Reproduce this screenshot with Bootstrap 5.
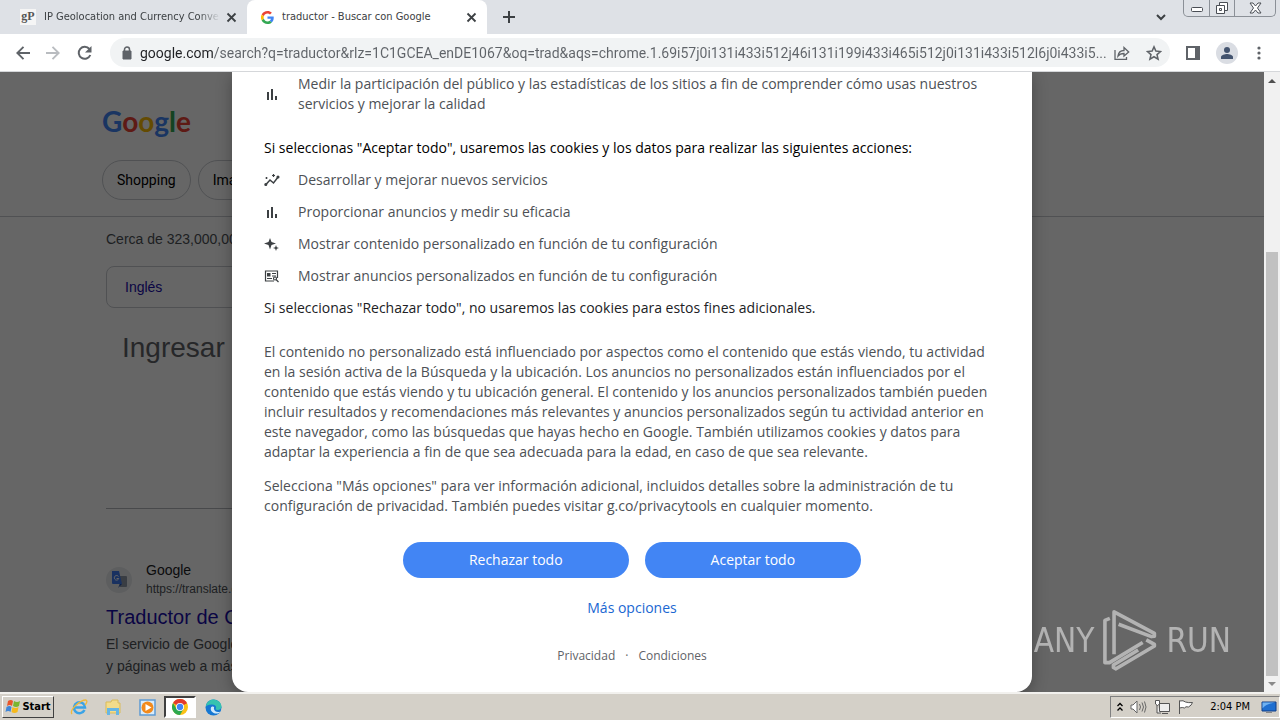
<!DOCTYPE html>
<html lang="es">
<head>
<meta charset="utf-8">
<meta name="viewport" content="width=device-width, initial-scale=1">
<title>traductor - Buscar con Google</title>
<link href="https://cdn.jsdelivr.net/npm/bootstrap@5.3.0/dist/css/bootstrap.min.css" rel="stylesheet">
<style>
body{font-family:"Liberation Sans",Arial,sans-serif;font-size:14px;line-height:20px;color:#4d5156;height:100vh;overflow:hidden}
a{text-decoration:none}
button{font:inherit;color:inherit}
.ibtn{border:0;background:none;padding:0;display:flex;align-items:center;justify-content:center;flex:none}
.ui{font-family:"DejaVu Sans Condensed",sans-serif;font-size:11px;color:#3c4043}
.tabstrip{background:#dee1e6;height:34px}
.tab{width:240px;height:34px;padding:0 8px 0 14px}
.tab.idle{width:247px;padding-left:20px}
.tab.on{background:#fff;border-radius:8px 8px 0 0}
.fade-end{-webkit-mask-image:linear-gradient(90deg,#000 88%,transparent);mask-image:linear-gradient(90deg,#000 88%,transparent)}
.gp{width:16px;height:16px;background:#f5f5f5;font:bold 12px/14px "Liberation Serif",serif;color:#555}
.winctl{height:17px;border:1px solid #8b9097;border-top:0;border-radius:0 0 5px 5px}
.winctl .ibtn{width:25px}
.winctl .ibtn:last-child{width:41px}
.winctl button+button{border-left:1px solid #8b9097}
.toolbar{height:38px;border-bottom:1px solid #d5d7da}
.omni{height:29px;border-radius:15px;background:#f1f3f4;min-width:0}
.omni input{font-family:Roboto,sans-serif;font-size:14px;min-width:0;border:0;outline:0;padding:0;color:transparent;background:linear-gradient(90deg,#202124 73px,#5f6368 73px);-webkit-background-clip:text;background-clip:text}
.avatar{width:22px;height:22px;border-radius:50%;background:#dadde3}
.stage{min-height:0}
.results{padding-top:30px;background:#fff}
.inset{padding-left:106px}
.glogo{font:bold 28px/38px Lato,sans-serif;padding:0 0 2px 102px}
.chips{padding:18px 0 16px 102px;gap:7px;border-bottom:1px solid #c8cbd0}
.chip{height:40px;border:1px solid #c8cbd0;border-radius:20px;background:none;color:#000;padding:0 14px;font-family:Roboto,sans-serif}
.langbox{width:652px;height:42px;border:1px solid #c8cbd0;border-radius:8px;padding:0 18px;margin-top:17px}
.visited{color:#1a0dab}
.prompt{font-size:28px;line-height:36px;margin:22px 0 0 16px;color:#5f6368}
.rule{width:652px;border-top:1px solid #b4b7bb;margin:142px 0 52px 106px}
.fav{width:26px;height:26px;margin-right:14px;border-radius:50%;background:#e8eaed}
.site{font-size:12px;line-height:18px}
.site b{font-weight:400;font-size:14px;color:#202124}
.result-title{font-size:20px;line-height:28px;margin-top:5px}
.snippet{line-height:22px;margin-top:2px}
.veil{background:rgba(0,0,0,.6)}
.consent{width:800px;max-width:100%;border-radius:0 0 16px 16px;padding:2px 32px 0;box-shadow:0 4px 16px rgba(0,0,0,.3);font-family:"Open Sans",sans-serif}
.consent ul{gap:12px}
.consent li{gap:18px}
.consent h2{font-size:14px;line-height:20px;font-weight:400;margin:0 0 12px}
.consent p{margin-bottom:14px}
.strongish{color:#202124}
.consent .after{margin-bottom:24px}
.pill{height:36px;border:0;border-radius:18px;background:#4285f4;color:#fff;font-weight:500;padding:0 66px}
.more{color:#1a67d2;font-weight:500}
.foot{font-size:12px;color:#5f6368;gap:10px}
.foot a{color:inherit}
.sbar{width:16px;background:#f1f1f1}
.thumb{width:12px;background:#c1c1c1;height:424px;max-height:80%}
.wm{right:33px;bottom:20px;gap:8px;opacity:.5;color:#fff;font:33px/63px "DejaVu Sans Condensed",sans-serif}
.taskbar{height:28px;background:#d4d0c8;border-top:2px solid #f2f1ee;color:#000;padding-left:2px}
.startbtn{height:22px;width:52px;border:1px solid;border-color:#fff #404040 #404040 #fff;background:#d4d0c8;font-weight:bold}
.task{width:34px;height:22px}
.task.cur{width:32px;border:2px solid;border-color:#404040 #fff #fff #404040;background:#fff}
.tray{border:1px solid;border-color:#808080 #fff #fff #808080;height:22px;gap:7px;padding:0 2px 0 6px}
</style>
</head>
<body class="d-flex flex-column">
<header class="flex-shrink-0">
 <div class="tabstrip ui d-flex">
  <div class="tab idle d-flex align-items-center">
   <span class="gp text-center flex-shrink-0 me-2">gP</span>
   <span class="flex-fill text-nowrap overflow-hidden fade-end">IP Geolocation and Currency Conver</span>
   <button class="ibtn ms-1" aria-label="Cerrar pestaña"><svg width="15" height="15" viewBox="0 0 15 15"><path d="M3.500 3.500l8 8m0-8l-8 8" stroke="#3c4043" stroke-width="1.800"/></svg></button>
  </div>
  <div class="tab on d-flex align-items-center">
   <svg class="flex-shrink-0 me-2" width="13" height="13" viewBox="0 0 48 48"><path fill="#EA4335" d="M24 9.500c3.500 0 6.700 1.200 9.200 3.600l6.900-6.900C35.900 2.400 30.500 0 24 0 14.600 0 6.500 5.400 2.600 13.200l8 6.200C12.400 13.700 17.700 9.500 24 9.500z"/><path fill="#4285F4" d="M47 24.500c0-1.600-.2-3.100-.4-4.500H24v9h12.900c-.6 3-2.200 5.500-4.700 7.200l7.700 6C44.400 38 47 31.800 47 24.500z"/><path fill="#FBBC05" d="M10.500 28.600a14.500 14.500 0 0 1 0-9.200l-8-6.200a24 24 0 0 0 0 21.600z"/><path fill="#34A853" d="M24 48c6.500 0 11.900-2.100 15.900-5.800l-7.700-6c-2.200 1.400-4.900 2.300-8.200 2.300-6.300 0-11.600-4.200-13.500-9.900l-8 6.200C6.500 42.600 14.600 48 24 48z"/></svg>
   <span class="flex-fill text-nowrap">traductor - Buscar con Google</span>
   <button class="ibtn" aria-label="Cerrar pestaña"><svg width="15" height="15" viewBox="0 0 15 15"><path d="M3.500 3.500l8 8m0-8l-8 8" stroke="#3c4043" stroke-width="1.800"/></svg></button>
  </div>
  <button class="ibtn ms-3" aria-label="Nueva pestaña"><svg width="12" height="12" viewBox="0 0 12 12"><path d="M6 0v12M0 6h12" stroke="#3c4043" stroke-width="2"/></svg></button>
  <button class="ibtn ms-auto me-3" aria-label="Buscar pestañas"><svg width="12" height="8" viewBox="0 0 12 8"><path d="M2 2l4 4 4-4" fill="none" stroke="#3c4043" stroke-width="2"/></svg></button>
  <div class="winctl d-flex me-1">
   <button class="ibtn" aria-label="Minimizar"><svg width="14" height="14" viewBox="0 0 14 14"><rect x="1.500" y="6.500" width="11" height="4" rx="1" fill="#fff" stroke="#4a4e55"/></svg></button>
   <button class="ibtn" aria-label="Restaurar"><svg width="14" height="14" viewBox="0 0 14 14" fill="#fff" stroke="#4a4e55"><path d="M4.500 1.500h8v8h-8z"/><path d="M1.500 4.500h8v8h-8z"/><path d="M4.500 7.500h2v2h-2z"/></svg></button>
   <button class="ibtn" aria-label="Cerrar"><svg width="13" height="12" viewBox="0 0 13 12"><path d="M1 1h3l2.500 3L9 1h3L8.500 6l3.500 5H9L6.500 8 4 11H1l3.500-5z" fill="#fff" stroke="#4a4e55"/></svg></button>
  </div>
 </div>
 <div class="toolbar d-flex align-items-center bg-white">
  <button class="ibtn ms-3" aria-label="Atrás"><svg width="14" height="14" viewBox="0 0 14 14"><path d="M7.500 .8L1.300 7l6.200 6.200M1.300 7H14" fill="none" stroke="#5f6368" stroke-width="1.900"/></svg></button>
  <button class="ibtn ms-3" aria-label="Adelante"><svg width="14" height="14" viewBox="0 0 14 14"><path d="M6.500 .8L12.700 7l-6.200 6.200M12.700 7H0" fill="none" stroke="#b9bcc0" stroke-width="1.900"/></svg></button>
  <button class="ibtn ms-3" aria-label="Recargar"><svg width="18" height="16" viewBox="0 0 18 16"><path d="M14.300 10A6 6 0 1 1 13.400 4" fill="none" stroke="#5f6368" stroke-width="2"/><path d="M15.500 1v6.500H9z" fill="#5f6368"/></svg></button>
  <div class="omni d-flex align-items-center flex-fill mx-3 px-2">
   <svg class="flex-shrink-0 ms-1 me-2" width="10" height="14" viewBox="0 0 10 14"><path d="M1 5h8v8H1z" fill="#5f6368" stroke="#5f6368" stroke-linejoin="round"/><path d="M2.500 5V3.500a2.500 2.500 0 0 1 5 0V5" fill="none" stroke="#5f6368" stroke-width="1.500"/></svg>
   <input class="flex-fill" type="text" readonly aria-label="Dirección" value="google.com/search?q=traductor&amp;rlz=1C1GCEA_enDE1067&amp;oq=trad&amp;aqs=chrome.1.69i57j0i131i433i512j46i131i199i433i465i512j0i131i433i512l6j0i433i5...">
   <button class="ibtn ms-1" aria-label="Compartir"><svg width="16" height="16" viewBox="0 0 16 16" fill="none" stroke="#5f6368" stroke-width="1.300"><path d="M1 5v9.300h11.500V12"/><path d="M4 11c.5-4 2.500-5.500 6-5.500V2.500L14.700 7 10 11V8.500C7 8.500 5.500 9 4 11z"/></svg></button>
   <button class="ibtn ms-3" aria-label="Favorito"><svg width="16" height="16" viewBox="0 0 24 24"><path d="M12 2.800l2.800 6.400 7 .6-5.300 4.600 1.600 6.800L12 17.600l-6.100 3.600 1.600-6.800L2.200 9.800l7-.6z" fill="none" stroke="#5f6368" stroke-width="2.300"/></svg></button>
  </div>
  <button class="ibtn" aria-label="Panel lateral"><svg width="14" height="14" viewBox="0 0 14 14"><path d="M1 1h12v12H1z" fill="#fff" stroke="#5f6368" stroke-width="2"/><path d="M9 0h5v14H9z" fill="#5f6368"/></svg></button>
  <button class="ibtn avatar mx-3" aria-label="Perfil"><svg width="14" height="14" viewBox="0 0 14 14" fill="#44546f"><circle cx="7" cy="4" r="3"/><path d="M1 13v-2c0-2 4-3 6-3s6 1 6 3v2z"/></svg></button>
  <button class="ibtn me-3" aria-label="Menú"><svg width="10" height="14" viewBox="0 0 10 14" fill="#5f6368"><circle cx="5" cy="2" r="1.600"/><circle cx="5" cy="7" r="1.600"/><circle cx="5" cy="12" r="1.600"/></svg></button>
 </div>
</header>

<div class="stage d-flex flex-fill">
 <main class="position-relative flex-fill overflow-hidden">
  <div class="results h-100 text-nowrap">
   <div class="glogo"><span style="color:#4285f4">G</span><span style="color:#ea4335">o</span><span style="color:#fbbc05">o</span><span style="color:#4285f4">g</span><span style="color:#34a853">l</span><span style="color:#ea4335">e</span></div>
   <nav class="chips d-flex"><button class="chip">Shopping</button><button class="chip">Imágenes</button></nav>
   <div class="inset">
    <div class="pt-2 mt-1">Cerca de 323,000,000</div>
    <div class="langbox d-flex align-items-center"><a href="#" class="visited">Inglés</a></div>
    <div class="prompt">Ingresar</div>
   </div>
   <div class="rule"></div>
   <div class="inset">
    <div class="d-flex align-items-center">
     <span class="fav d-flex align-items-center justify-content-center"><svg width="17" height="17" viewBox="0 0 17 17"><path d="M6 5h9q1 0 1 1v9q0 1-1 1H9z" fill="#8f98a8"/><path d="M1 0h7l3 13H2q-1 0-1-1z" fill="#3f7cf0"/><path d="M7.500 5.500a2.300 2.300 0 1 0 .3 2H5.600" fill="none" stroke="#fff"/><path d="M9 13l-2 4 4-4z" fill="#2050b0"/></svg></span>
     <div class="site"><b>Google</b><br>https://translate.google</div>
    </div>
    <div class="result-title"><a href="#" class="visited">Traductor de Google</a></div>
    <div class="snippet">El servicio de Google<br>y páginas web a más</div>
   </div>
  </div>
  <div class="veil position-absolute top-0 start-0 w-100 h-100"></div>
  <div class="position-absolute top-0 start-0 w-100 h-100 d-flex justify-content-center">
  <section class="consent bg-white h-100 overflow-hidden" role="dialog" aria-label="Cookies">
   <ul class="list-unstyled mb-4">
    <li class="d-flex align-items-center"><svg class="flex-shrink-0" width="16" height="16" viewBox="0 0 16 16" fill="#3c4043"><path d="M3 6h2v8H3zM7 3h2v11H7zM11 10h2v4h-2z"/></svg><span>Medir la participación del público y las estadísticas de los sitios a fin de comprender cómo usas nuestros servicios y mejorar la calidad</span></li>
   </ul>
   <h2 class="text-black">Si seleccionas "Aceptar todo", usaremos las cookies y los datos para realizar las siguientes acciones:</h2>
   <ul class="list-unstyled d-flex flex-column mb-0">
    <li class="d-flex align-items-center"><svg width="16" height="16" viewBox="0 0 16 16" fill="none" stroke="#3c4043" stroke-width="1.500"><path d="M1.500 13L6 8l3.500 3L14.500 4.500"/><circle cx="1.800" cy="12.500" r=".8"/><circle cx="14" cy="5" r=".8"/><path d="M9.500 2v3M8 3.500h3M2.500 5v2M1.500 6h2" stroke-width="1.200"/></svg><span>Desarrollar y mejorar nuevos servicios</span></li>
    <li class="d-flex align-items-center"><svg width="16" height="16" viewBox="0 0 16 16" fill="#3c4043"><path d="M3 6h2v8H3zM7 3h2v11H7zM11 10h2v4h-2z"/></svg><span>Proporcionar anuncios y medir su eficacia</span></li>
    <li class="d-flex align-items-center"><svg width="16" height="16" viewBox="0 0 16 16" fill="#3c4043"><path d="M6 2l1.500 4L12 7.500 7.500 9 6 13.500 4.500 9 0 7.500 4.500 6zM12 9l.8 2.200L15 12l-2.200.8L12 15l-.8-2.200L9 12l2.200-.8z"/></svg><span>Mostrar contenido personalizado en función de tu configuración</span></li>
    <li class="d-flex align-items-center"><svg width="16" height="16" viewBox="0 0 16 16" fill="none" stroke="#3c4043" stroke-width="1.200"><path d="M10 13H1.500V3h12v7M8 5.500h4M8 8h4M3 10.500h5"/><path d="M3 5h3.500v3.500H3z" fill="#3c4043" stroke="none"/><circle cx="11" cy="10.500" r="1.500"/><path d="M12 11.500l2.500 2.500"/></svg><span>Mostrar anuncios personalizados en función de tu configuración</span></li>
   </ul>
   <p class="strongish after pt-2 mt-1">Si seleccionas "Rechazar todo", no usaremos las cookies para estos fines adicionales.</p>
   <p>El contenido no personalizado está influenciado por aspectos como el contenido que estás viendo, tu actividad en la sesión activa de la Búsqueda y la ubicación. Los anuncios no personalizados están influenciados por el contenido que estás viendo y tu ubicación general. El contenido y los anuncios personalizados también pueden incluir resultados y recomendaciones más relevantes y anuncios personalizados según tu actividad anterior en este navegador, como las búsquedas que hayas hecho en Google. También utilizamos cookies y datos para adaptar la experiencia a fin de que sea adecuada para la edad, en caso de que sea relevante.</p>
   <p>Selecciona "Más opciones" para ver información adicional, incluidos detalles sobre la administración de tu configuración de privacidad. También puedes visitar g.co/privacytools en cualquier momento.</p>
   <div class="d-flex justify-content-center gap-3 pt-2 mt-1 pb-1"><button class="pill mt-1">Rechazar todo</button><button class="pill mt-1">Aceptar todo</button></div>
   <div class="text-center mt-3"><a href="#" class="more">Más opciones</a></div>
   <div class="foot d-flex justify-content-center mt-4 pt-1"><a href="#">Privacidad</a><span>·</span><a href="#">Condiciones</a></div>
  </section>
  </div>
  <div class="wm position-absolute d-flex align-items-center"><span>ANY</span><svg width="56" height="63" viewBox="268 26 172 192" fill="none" stroke="#fff" stroke-width="11" stroke-linejoin="round"><path d="M292 54l-15 6v130h14l102-62"/><path d="M305 164V34l124 66v9l-9 1-101-38"/><path d="M404 120l25 14v5L311 209l-8-4v-8l76-46"/></svg><span>RUN</span></div>
 </main>
 <div class="sbar flex-shrink-0 d-flex flex-column align-items-center" aria-hidden="true">
  <svg width="16" height="17" viewBox="0 0 16 17"><path d="M4 11l4-4 4 4z" fill="#505050"/></svg>
  <div class="mt-auto thumb"></div>
  <svg width="16" height="16" viewBox="0 0 16 16"><path d="M4 6l4 4 4-4z" fill="#8a8a8a"/></svg>
 </div>
</div>

<footer class="taskbar ui flex-shrink-0 d-flex align-items-center text-black">
 <button class="startbtn ibtn me-2"><svg width="17" height="16" viewBox="0 0 17 16"><path d="M3 2q3-2 5 0L7 7Q5 5 2 7z" fill="#e8562a"/><path d="M9 2q3 2 6 0l-1 5q-3 2-6 0z" fill="#7ab530"/><path d="M1.500 8q3-2 5 0l-1 5q-2-2-5 0z" fill="#3f86d8"/><path d="M7.500 8q3 2 6 0l-1 5q-3 2-6 0z" fill="#f6b91c"/></svg>Start</button>
 <button class="ibtn task" aria-label="Internet Explorer"><svg width="18" height="18" viewBox="0 0 18 18" fill="none"><path d="M14.500 12A5.500 5.500 0 1 1 15 9.500H5" stroke="#3aa3e6" stroke-width="2.500"/><path d="M2 16C-1 12 10 2 16 2c2 1 0 4-1 5" stroke="#f0b93a" stroke-width="1.300"/></svg></button>
 <button class="ibtn task" aria-label="Explorador"><svg width="18" height="17" viewBox="0 0 18 17"><path d="M2 3h5l1-2h6v3h2v10H2z" fill="#f3dc8a" stroke="#d9bb5a"/><path d="M3 16V9h12v7h-3v-4H6v4z" fill="#67b6e4"/></svg></button>
 <button class="ibtn task" aria-label="Reproductor"><svg width="17" height="17" viewBox="0 0 17 17"><path d="M1 1h15v15H1z" fill="#d9ecfb" stroke="#5d9bd4" stroke-width="1.500"/><circle cx="8.500" cy="8.500" r="6" fill="#f28a1c"/><path d="M6.500 5l6 3.500-6 3.500z" fill="#fff"/></svg></button>
 <button class="ibtn task cur" aria-label="Chrome"><svg width="16" height="16" viewBox="0 0 48 48"><circle cx="24" cy="24" r="24" fill="#fbc116"/><path d="M24 24L3.200 12A24 24 0 0 1 44.800 12z" fill="#e33b2e"/><path d="M3.200 12A24 24 0 0 0 24 48l10.400-18H13.600z" fill="#2da94f"/><path d="M24 12h20.800L34 18z" fill="#e33b2e"/><circle cx="24" cy="24" r="12" fill="#fff"/><circle cx="24" cy="24" r="9.500" fill="#4285f4"/></svg></button>
 <button class="ibtn task" aria-label="Edge"><svg width="17" height="17" viewBox="0 0 17 17"><circle cx="8.500" cy="8.500" r="8" fill="#1677d2"/><path d="M.8 7.500C2 2 6-.1 10 .7c4 .8 6.500 3.800 6.500 7 0 3-4 4-6 2.500 2-3-1-5-4-4.700C3.500 5.700 1.500 6.500.8 7.500z" fill="#35c3b0"/><path d="M6 8.500c-1 3 1.500 6.500 6.500 6 1.500-.3 2.500-1.300 3-2-3 1.200-6 .2-6.500-2.500-.2-1 .3-1.600 0-2-.8-1-2.500-.5-3 .5z" fill="#cfe9fb"/></svg></button>
 <div class="tray d-flex align-items-center ms-auto">
  <svg width="6" height="10" viewBox="0 0 6 10" fill="none" stroke="#000" stroke-width="1.300"><path d="M.5 4L3 1.500 5.500 4M.5 8.500L3 6l2.500 2.500"/></svg>
  <svg width="17" height="16" viewBox="0 0 17 16" fill="#fff" stroke="#666"><path d="M1 6h2l4-4v12l-4-4H1z"/><path d="M9.500 5q2 3 0 6M12 3.500q3 4.500 0 9M14.500 2.500q3 5.500 0 11" fill="none"/></svg>
  <svg width="17" height="16" viewBox="0 0 17 16" fill="#eee" stroke="#555"><path d="M5.500 4.500h10v8h-10zM8 14.500h6M3 6v8h4"/><path d="M1.500 1.500h4V5l-2 1.500-2-1.500z" fill="#fff"/></svg>
  <svg width="17" height="16" viewBox="0 0 17 16" fill="#fff" stroke="#555"><path d="M1.500 15V1.500"/><path d="M1.500 2q4-1 6 1 3 1 7 .5-1 3-4 4.500-3-1-4 1-2-1-5 0z"/></svg>
  <span class="ps-2 pe-1">2:04 PM</span>
  <svg width="16" height="14" viewBox="0 0 16 14"><path d="M1 2h14v9H1z" fill="#1f6fd0" stroke="#123f86"/><path d="M1.500 2.500h13q-9 1-13 6z" fill="#6fb2f2"/><path d="M5 12h6v1H5z" fill="#888"/></svg>
 </div>
</footer>
<script src="https://cdn.jsdelivr.net/npm/bootstrap@5.3.0/dist/js/bootstrap.bundle.min.js"></script>
</body>
</html>
